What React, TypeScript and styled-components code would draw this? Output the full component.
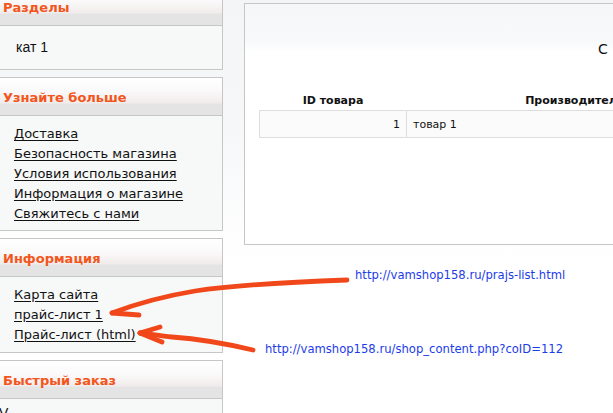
import styled, { createGlobalStyle } from "styled-components";

const GlobalStyle = createGlobalStyle`
  html, body {
    margin: 0;
    padding: 0;
  }
  body {
    background: linear-gradient(#f3f5f7 0, #f6f7f9 120px, #ffffff 260px);
    width: 613px;
    height: 413px;
    overflow: hidden;
  }
`;

const Page = styled.div`
  position: relative;
  display: flex;
  align-items: flex-start;
  gap: 21px;
  width: 613px;
  height: 413px;
  overflow: hidden;
`;

const Sidebar = styled.div`
  display: flex;
  flex-direction: column;
  gap: 7px;
  flex: 0 0 225px;
  margin-left: -2px;
  margin-top: -13px;
`;

const Box = styled.div`
  flex-shrink: 0;
  border: 1px solid #c6c6c6;
  background: #f7f8f8;
`;

const BoxHeader = styled.div`
  height: 38px;
  box-sizing: border-box;
  padding: 12px 0 0 4px;
  border-bottom: 1px solid #c6c6c6;
  background: linear-gradient(#ffffff 0, #fbfafa 12px, #f1ecec 25px, #e4e4e4 26px, #e4e4e4 37px);
  color: #f2561c;
  font-family: "DejaVu Sans", Verdana, sans-serif;
  font-weight: bold;
  font-size: 13px;
  line-height: 16px;
`;

const BoxBody = styled.div<{ $height: number }>`
  height: ${(p) => p.$height}px;
  box-sizing: border-box;
  padding: 8px 0 0 15px;
`;

const Category = styled.div<{ $top: number; $left: number }>`
  padding: ${(p) => p.$top}px 0 0 ${(p) => p.$left}px;
  font-family: "Liberation Sans", Arial, sans-serif;
  font-size: 14px;
  color: #111;
`;

const LinkList = styled.ul`
  list-style: none;
  margin: 0;
  padding: 0;
`;

const LinkItem = styled.li`
  font-family: "DejaVu Sans", Verdana, sans-serif;
  font-size: 13px;
  line-height: 20px;
  a {
    color: #111;
    text-decoration: underline;
    text-underline-offset: 2px;
  }
`;

const Main = styled.div`
  flex: 0 0 760px;
  margin-top: 3px;
  height: 242px;
  box-sizing: border-box;
  border: 1px solid #c6c6c6;
  background: linear-gradient(#f5f7f8 0, #f7f9fa 38px, #ffffff 48px);
`;

const Title = styled.div`
  padding: 37px 0 0 353px;
  height: 86px;
  box-sizing: border-box;
  font-family: "DejaVu Sans", Tahoma, sans-serif;
  font-size: 14px;
  color: #111;
`;

const Table = styled.table`
  margin-left: 14px;
  border-collapse: collapse;
  font-family: "DejaVu Sans", Tahoma, sans-serif;
  font-size: 11px;
  color: #111;
`;

const Th = styled.th<{ $w: number }>`
  width: ${(p) => p.$w}px;
  height: 20px;
  padding: 0;
  background: #ffffff;
  font-weight: bold;
  text-align: center;
  border-bottom: 1px solid #dedede;
`;

const Td = styled.td<{ $align?: string }>`
  height: 26px;
  padding: 0 6px;
  background: #fbfbfb;
  border: 1px solid #dedede;
  text-align: ${(p) => p.$align || "left"};
`;

const Note = styled.div<{ $x: number; $y: number }>`
  position: absolute;
  left: ${(p) => p.$x}px;
  top: ${(p) => p.$y}px;
  font-family: "DejaVu Sans", Tahoma, sans-serif;
  font-size: 11.6px;
  color: #1c3ce8;
  white-space: nowrap;
`;

const Overlay = styled.svg`
  position: absolute;
  left: 0;
  top: 0;
  pointer-events: none;
`;

const boxes = [
  {
    title: "Узнайте больше",
    height: 114,
    links: [
      "Доставка",
      "Безопасность магазина",
      "Условия использования",
      "Информация о магазине",
      "Свяжитесь с нами",
    ],
  },
  {
    title: "Информация",
    height: 75,
    links: ["Карта сайта", "прайс-лист 1", "Прайс-лист (html)"],
  },
];

export default function App() {
  return (
    <>
      <GlobalStyle />
      <Page>
        <Sidebar>
          <Box>
            <BoxHeader>Разделы</BoxHeader>
            <BoxBody $height={43} style={{ padding: 0 }}>
              <Category $top={13} $left={17}>кат 1</Category>
            </BoxBody>
          </Box>
          {boxes.map((b) => (
            <Box key={b.title}>
              <BoxHeader>{b.title}</BoxHeader>
              <BoxBody $height={b.height}>
                <LinkList>
                  {b.links.map((l) => (
                    <LinkItem key={l}>
                      <a href="#">{l}</a>
                    </LinkItem>
                  ))}
                </LinkList>
              </BoxBody>
            </Box>
          ))}
          <Box>
            <BoxHeader>Быстрый заказ</BoxHeader>
            <BoxBody $height={60} style={{ padding: 0 }}>
              <Category $top={6} $left={0}>V</Category>
            </BoxBody>
          </Box>
        </Sidebar>
        <Main>
          <Title>С</Title>
          <Table>
            <thead>
              <tr>
                <Th $w={147}>ID товара</Th>
                <Th $w={336}>Производитель</Th>
              </tr>
            </thead>
            <tbody>
              <tr>
                <Td $align="right">1</Td>
                <Td>товар 1</Td>
              </tr>
            </tbody>
          </Table>
        </Main>

        <Note $x={355} $y={268}>http://vamshop158.ru/prajs-list.html</Note>
        <Note $x={265} $y={342}>http://vamshop158.ru/shop_content.php?coID=112</Note>

        <Overlay width="613" height="413" viewBox="0 0 613 413">
          <g
            fill="none"
            stroke="#f0481a"
            strokeWidth="4.8"
            strokeLinecap="round"
            strokeLinejoin="round"
          >
            <path d="M347,280 C290,282 235,285 195,291 C165,296 138,303 112,313" />
            <path d="M112,313 L139,315" />
            <path d="M253,350 C232,345 200,339 172,337 C160,336 150,334 140,333" />
            <path d="M140,333 L160,327" />
            <path d="M140,333 L162,342" />
          </g>
        </Overlay>
      </Page>
    </>
  );
}
